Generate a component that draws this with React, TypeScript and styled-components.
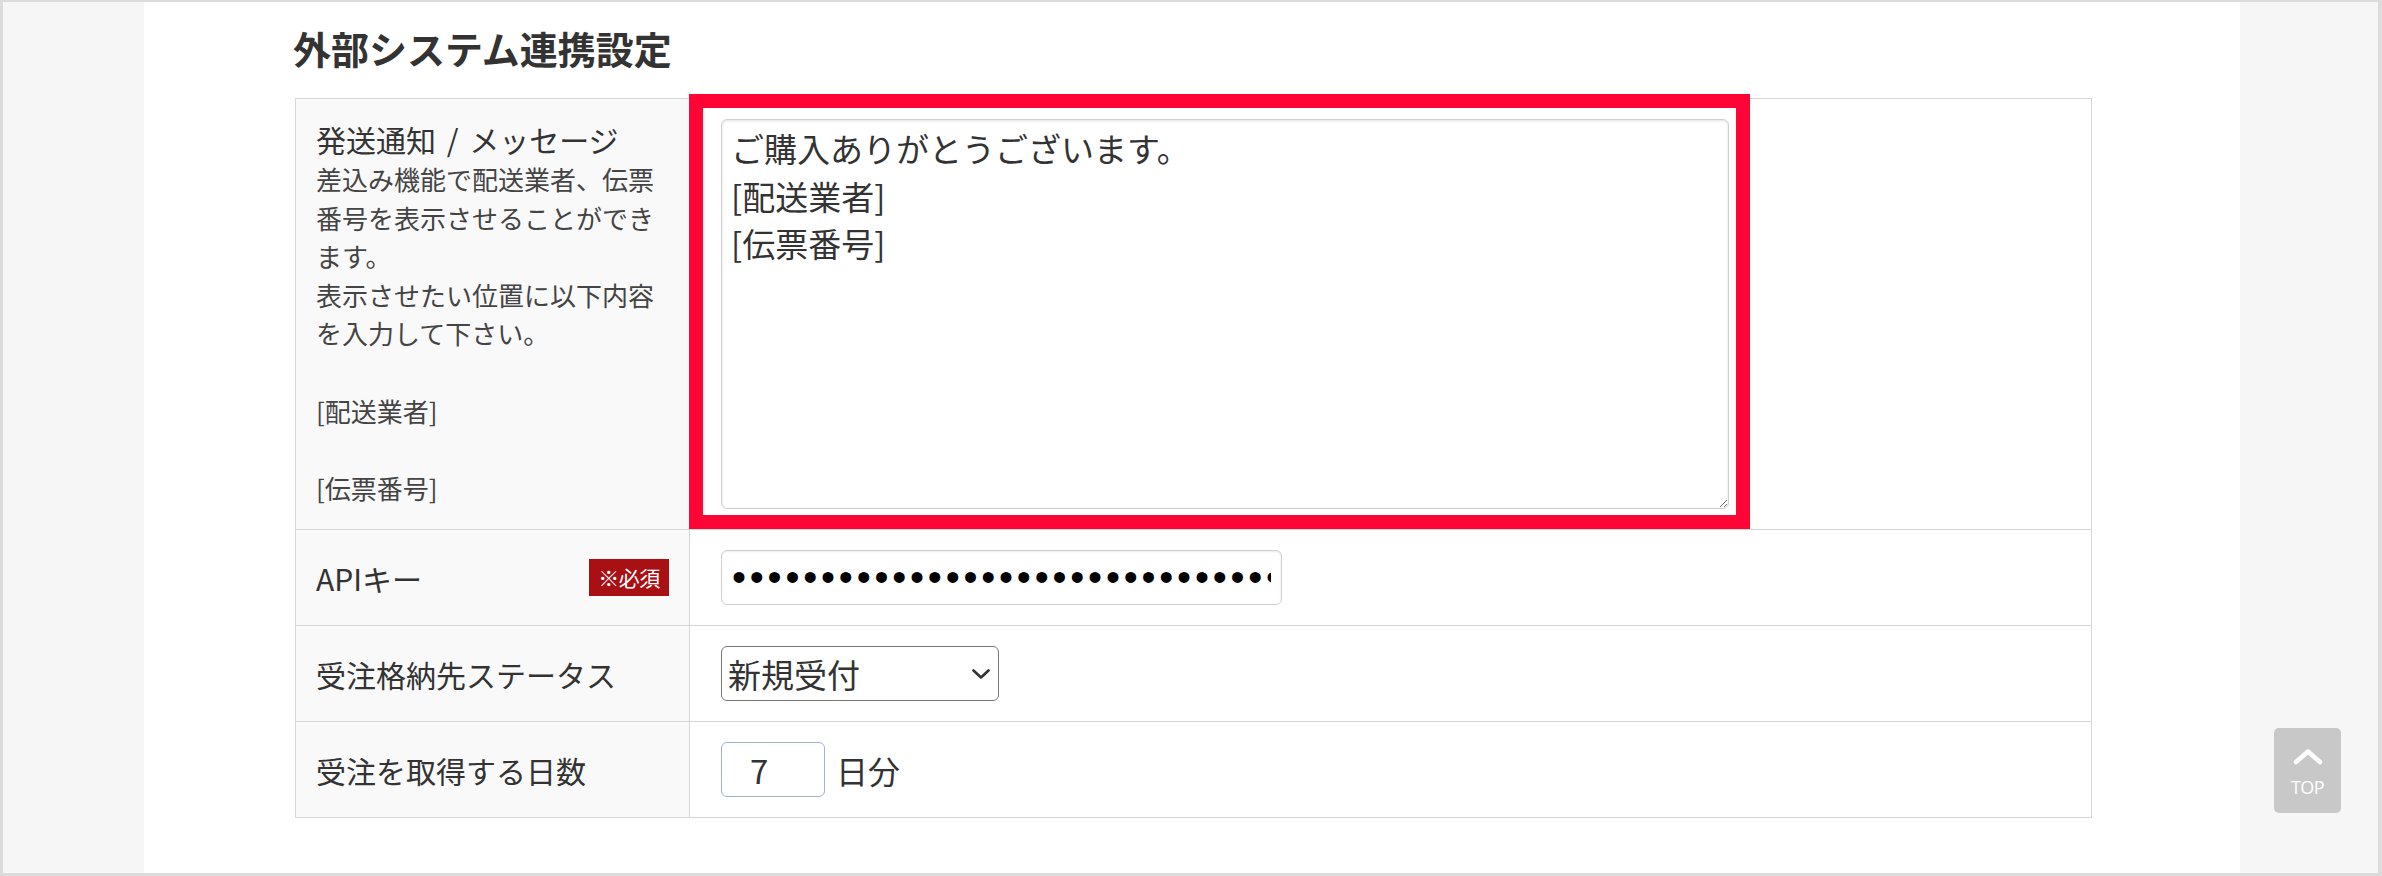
import React from 'react'
import styled, { createGlobalStyle } from 'styled-components'

const GlobalStyle = createGlobalStyle`
  html, body {
    margin: 0;
    padding: 0;
    background: #fff;
  }
  body {
    font-family: "Noto Sans CJK JP", "Noto Sans", sans-serif;
    color: #333;
  }
`

const App = () => {
  return (
    <>
      <GlobalStyle />
      <Frame>
        <Side />
        <Main>
          <Title>外部システム連携設定</Title>
          <Table>
            <tbody>
              <tr>
                <Label top>
                  発送通知 / メッセージ
                  <Desc>
                    差込み機能で配送業者、伝票番号を表示させることができます。
                    <br />
                    表示させたい位置に以下内容を入力して下さい。
                    <br />
                    <br />
                    [配送業者]
                    <br />
                    <br />
                    [伝票番号]
                  </Desc>
                </Label>
                <Value>
                  <Marked>
                    <Message defaultValue={'ご購入ありがとうございます。\n[配送業者]\n[伝票番号]'} />
                    <Highlight />
                  </Marked>
                </Value>
              </tr>
              <tr>
                <Label>
                  <LabelRow>
                    APIキー
                    <Required>※必須</Required>
                  </LabelRow>
                </Label>
                <Value>
                  <KeyInput type="password" defaultValue={'a'.repeat(48)} />
                </Value>
              </tr>
              <tr>
                <Label>受注格納先ステータス</Label>
                <Value>
                  <SelectBox>
                    <Select defaultValue="new">
                      <option value="new">新規受付</option>
                      <option value="wait">入金待ち</option>
                    </Select>
                    <Chevron viewBox="0 0 18 10">
                      <path d="M1.5 1.5 L9 8.5 L16.5 1.5" />
                    </Chevron>
                  </SelectBox>
                </Value>
              </tr>
              <tr>
                <Label>受注を取得する日数</Label>
                <Value>
                  <DaysRow>
                    <DaysInput type="text" defaultValue="7" />
                    <Unit>日分</Unit>
                  </DaysRow>
                </Value>
              </tr>
            </tbody>
          </Table>
        </Main>
        <Side />
        <TopButton>
          <svg width="30" height="17" viewBox="0 0 30 17">
            <path d="M3 14 L15 3.5 L27 14" fill="none" stroke="#fff" strokeWidth="4.5" strokeLinecap="round" strokeLinejoin="round" />
          </svg>
          <TopText>TOP</TopText>
        </TopButton>
      </Frame>
    </>
  )
}

export default App

const Frame = styled.div`
  position: relative;
  box-sizing: border-box;
  height: 876px;
  border: 3px solid #dcdcdc;
  border-top-width: 2px;
  border-right-width: 4px;
  display: grid;
  grid-template-columns: 141px 1fr 138px;
  background: #f6f6f6;
`

const Side = styled.div`
  background: #f6f6f6;
`

const Main = styled.div`
  background: #fff;
  padding: 20px 150px 0 149px;
`

const Title = styled.h2`
  margin: 0 0 24px;
  font-size: 38px;
  line-height: 52px;
  font-weight: 700;
  color: #333;
`

const Table = styled.table`
  width: 100%;
  border-collapse: collapse;
  border: 1px solid #d6d6d6;
  margin-left: 2px;
`

const Label = styled.th<{ top?: boolean }>`
  width: 353px;
  padding: ${(p) => (p.top ? '19px 20px 18px' : '20px')};
  background: #f9f9f9;
  border: 1px solid #d6d6d6;
  font-size: 30px;
  line-height: 42px;
  font-weight: 400;
  text-align: left;
  color: #333;
  word-spacing: 4px;
  vertical-align: ${(p) => (p.top ? 'top' : 'middle')};
`

const LabelRow = styled.div`
  display: flex;
  align-items: center;
  justify-content: space-between;
`

const Required = styled.span`
  display: inline-flex;
  align-items: center;
  justify-content: center;
  width: 80px;
  height: 37px;
  background: #a81014;
  color: #fff;
  font-size: 21px;
  line-height: 1;
  letter-spacing: -0.5px;
`

const Desc = styled.div`
  font-size: 26px;
  line-height: 38.6px;
  color: #444;
  word-spacing: 0;
`

const Value = styled.td`
  padding: 20px 31px;
  border: 1px solid #d6d6d6;
  background: #fff;
  vertical-align: middle;
`

const Marked = styled.div`
  position: relative;
  width: 1008px;
`

const Message = styled.textarea`
  display: block;
  box-sizing: border-box;
  width: 1008px;
  height: 390px;
  margin: 0;
  padding: 5px 9px;
  border: 1px solid #cfcfcf;
  border-radius: 6px;
  box-shadow: inset 0 1px 3px rgba(0, 0, 0, 0.12);
  font-family: "Noto Sans CJK JP", sans-serif;
  font-size: 33px;
  line-height: 47.5px;
  color: #333;
  background: #fff;
`

// annotation frame drawn over the message box
const Highlight = styled.div`
  position: absolute;
  top: -25px;
  left: -32px;
  right: -21px;
  bottom: -20px;
  border: 14px solid #ff0536;
  pointer-events: none;
`

const KeyInput = styled.input`
  display: block;
  box-sizing: border-box;
  width: 561px;
  height: 55px;
  padding: 0 10px;
  border: 1px solid #cfcfcf;
  border-radius: 6px;
  box-shadow: inset 0 1px 2px rgba(0, 0, 0, 0.08);
  font-family: "Liberation Sans", sans-serif;
  font-size: 40px;
  letter-spacing: 3.8px;
  color: #000;
`

const SelectBox = styled.div`
  position: relative;
  width: 278px;
`

const Select = styled.select`
  display: block;
  box-sizing: border-box;
  width: 278px;
  height: 55px;
  padding: 0 40px 0 6px;
  border: 1px solid #777;
  border-radius: 6px;
  background: #fff;
  appearance: none;
  font-family: "Noto Sans CJK JP", sans-serif;
  font-size: 33px;
  color: #333;
`

const Chevron = styled.svg`
  position: absolute;
  right: 9px;
  top: 23px;
  width: 18px;
  height: 10px;
  fill: none;
  stroke: #333;
  stroke-width: 2.6;
  stroke-linecap: round;
  stroke-linejoin: round;
  pointer-events: none;
`

const DaysRow = styled.div`
  display: flex;
  align-items: center;
  gap: 11px;
`

const DaysInput = styled.input`
  box-sizing: border-box;
  width: 104px;
  height: 55px;
  padding: 0 0 0 28px;
  border: 1px solid #9fb3ca;
  border-radius: 6px;
  font-family: "Noto Sans CJK JP", sans-serif;
  font-size: 33px;
  color: #333;
`

const Unit = styled.span`
  font-size: 32px;
  color: #333;
`

const TopButton = styled.div`
  position: absolute;
  right: 37px;
  bottom: 60px;
  width: 67px;
  height: 85px;
  border-radius: 5px;
  background: #c8c8c8;
  display: flex;
  flex-direction: column;
  align-items: center;
  justify-content: center;
  gap: 13px;
  padding-top: 2px;
  box-sizing: border-box;
`

const TopText = styled.span`
  font-family: "Open Sans", "Liberation Sans", sans-serif;
  font-size: 18px;
  line-height: 1;
  color: #fff;
  letter-spacing: -0.5px;
`
